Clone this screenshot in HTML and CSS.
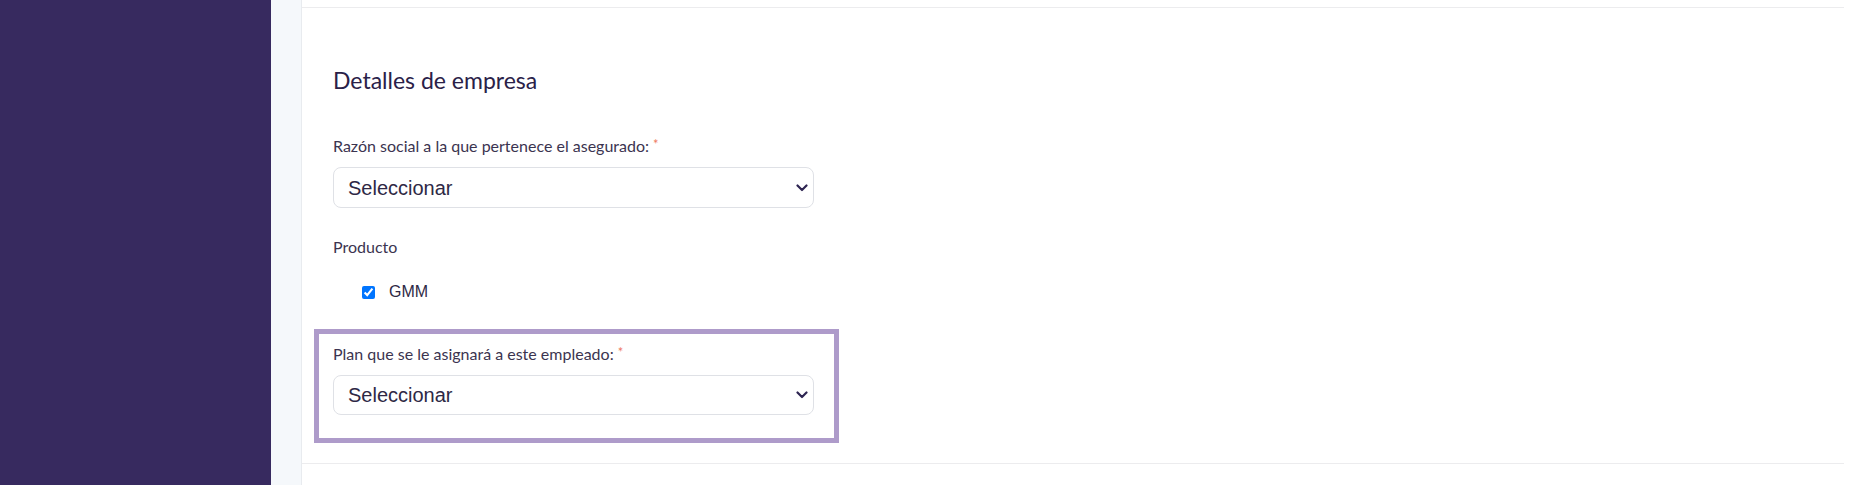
FILE: index.html
```html
<!DOCTYPE html>
<html lang="es">
<head>
  <meta charset="UTF-8" />
  <meta name="viewport" content="width=device-width, initial-scale=1.0" />
  <title>Detalles de empresa</title>
  <link rel="stylesheet" href="styles.css">
</head>
<body>

  <aside class="sidebar"></aside>
  <div class="gutter"></div>

  <main class="content">
    <div class="prev-section"></div>

    <section class="company">
      <h2>Detalles de empresa</h2>

      <div class="field">
        <label for="razon">Razón social a la que pertenece el asegurado: <span class="req">*</span></label>
        <div class="select-wrap">
          <select id="razon">
            <option>Seleccionar</option>
          </select>
          <svg class="chevron" viewBox="0 0 12 8" width="12" height="8"><path d="M1.5 1.5 6 6l4.5-4.5" fill="none" stroke="currentColor" stroke-width="2.2" stroke-linecap="round" stroke-linejoin="round"/></svg>
        </div>
      </div>

      <div class="field">
        <span class="field-title">Producto</span>
        <label class="check-row">
          <input type="checkbox" checked />
          <span>GMM</span>
        </label>
      </div>

      <div class="field field-focus">
        <label for="plan">Plan que se le asignará a este empleado: <span class="req">*</span></label>
        <div class="select-wrap">
          <select id="plan">
            <option>Seleccionar</option>
          </select>
          <svg class="chevron" viewBox="0 0 12 8" width="12" height="8"><path d="M1.5 1.5 6 6l4.5-4.5" fill="none" stroke="currentColor" stroke-width="2.2" stroke-linecap="round" stroke-linejoin="round"/></svg>
        </div>
      </div>
    </section>
  </main>

</body>
</html>
```

FILE: styles.css
```css
body {
  margin: 0;
  height: 485px;
  display: flex;
  font-family: 'Lato', 'Noto Sans', sans-serif;
  color: #3b3450;
  background: #fff;
  overflow: hidden;
}

.sidebar {
  width: 271px;
  flex-shrink: 0;
  background: #372a5f;
}

.gutter {
  width: 30px;
  flex-shrink: 0;
  background: #f5f8fb;
  border-right: 1px solid #e8ebef;
}

.content {
  flex: 1;
  padding-right: 19px;
}

.prev-section {
  height: 7px;
  border-bottom: 1px solid #ececee;
}

.company {
  padding: 0 0 20px 31px;
  border-bottom: 1px solid #ececee;
}

h2 {
  margin: 58px 0 40px;
  font-size: 23px;
  line-height: 28px;
  font-weight: 400;
  color: #2a2148;
}

.field label,
.field-title {
  display: block;
  font-size: 16px;
  line-height: 20px;
  margin-bottom: 11px;
}

.req {
  color: #ee7a62;
  font-size: 13px;
  vertical-align: 3px;
}

.select-wrap {
  position: relative;
  width: 481px;
}

.select-wrap select {
  display: block;
  width: 100%;
  height: 41px;
  padding: 0 36px 0 14px;
  border: 1px solid #dfe1e6;
  border-radius: 8px;
  background: #fff;
  font-family: 'Liberation Sans', Arial, sans-serif;
  font-size: 20px;
  color: #2e2845;
  appearance: none;
}

.chevron {
  position: absolute;
  right: 6px;
  top: 50%;
  margin-top: -4px;
  color: #2e2552;
  pointer-events: none;
}

.field {
  margin-bottom: 29px;
}

.field .check-row {
  display: flex;
  align-items: center;
  gap: 14px;
  margin: 25px 0 0 29px;
  font-family: 'Liberation Sans', Arial, sans-serif;
  font-size: 16px;
  color: #2e2845;
}

.check-row input {
  margin: 0;
  width: 13px;
  height: 13px;
}

.field-focus {
  margin: -2px 0 0 -19px;
  padding: 8px 20px 23px 14px;
  width: 481px;
  border: 5px solid #ae9bca;
}

.field-focus .select-wrap select {
  height: 40px;
}
```
